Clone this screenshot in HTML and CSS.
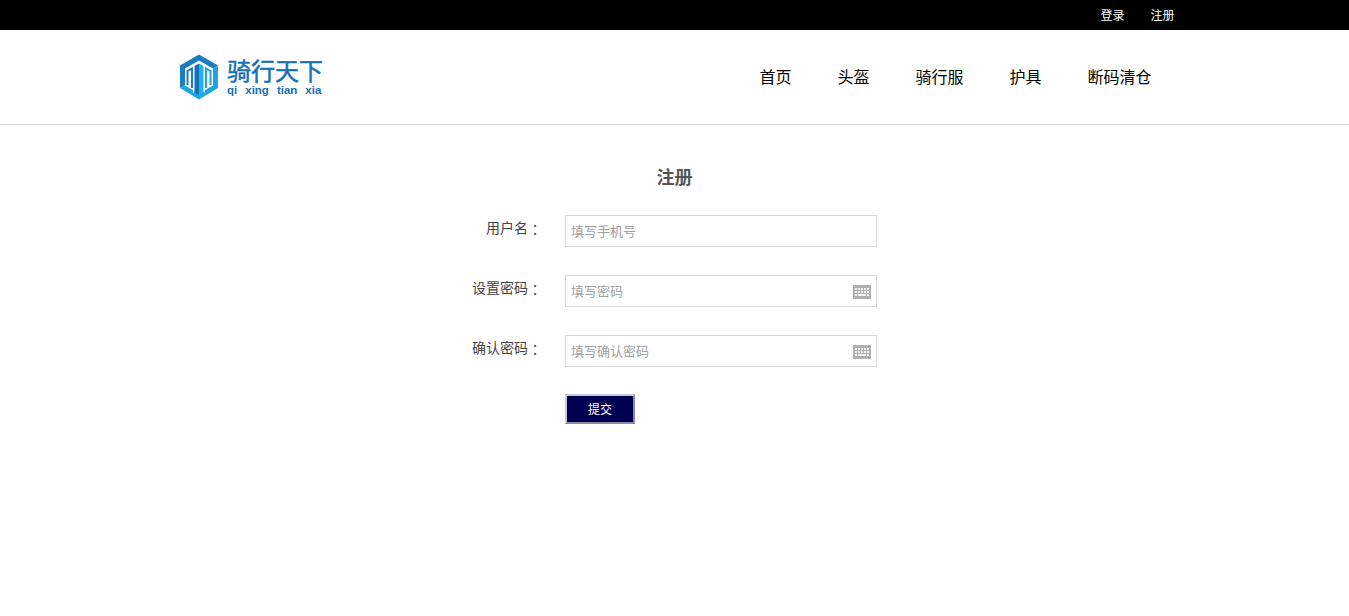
FILE: index.html
```html
<!DOCTYPE html>
<html lang="zh-CN">
<head>
<meta charset="utf-8">
<title>注册</title>
<link rel="stylesheet" href="styles.css">
</head>
<body>
<div class="topbar">
  <div class="container topbar-inner">
    <a class="top-link" href="#">登录</a>
    <a class="top-link" href="#">注册</a>
  </div>
</div>
<header class="header">
  <div class="container header-inner">
    <a class="logo" href="#">
      <svg class="logo-mark" width="40" height="46" viewBox="0 0 40 46">
        <path fill="#1a7cc4" d="M19 .5 38 11.500 33 14.500 19 6.500 5 14.500V31.500L0 34V11.500Z"/>
        <path fill="#1fa6e0" d="M38 11.500V34L19 45.500 0 34 5 31.500 19 39.500 33 31.500V14.500Z"/>
        <path fill="none" stroke="#1a7cc4" stroke-width="2" d="M7.500 31V17L12 14.500V34"/>
        <path fill="none" stroke="#1fa6e0" stroke-width="2" d="M30.500 31V17L26 14.500V34"/>
        <path fill="#fff" d="M13 13h1.500v25.500H13zM23.500 13H25v25.500h-1.500z"/>
        <path fill="#1670b8" d="M14.500 12 19 9.500V41L14.500 38.500Z"/>
        <path fill="#1cb4ea" d="M19 9.500 23.500 12V38.500L19 41Z"/>
      </svg>
      <span class="logo-text">
        <span class="logo-cn">骑行天下</span>
        <span class="logo-en"><span>qi</span><span>xing</span><span>tian</span><span>xia</span></span>
      </span>
    </a>
    <nav class="nav">
      <a href="#">首页</a>
      <a href="#">头盔</a>
      <a href="#">骑行服</a>
      <a href="#">护具</a>
      <a href="#">断码清仓</a>
    </nav>
  </div>
</header>
<main class="main">
  <h1 class="title">注册</h1>
  <form class="form">
    <div class="row">
      <label class="label">用户名<span class="colon" lang="zh-TW">：</span></label>
      <div class="field"><input class="input" type="text" placeholder="填写手机号"></div>
    </div>
    <div class="row">
      <label class="label">设置密码<span class="colon" lang="zh-TW">：</span></label>
      <div class="field">
        <input class="input" type="text" placeholder="填写密码">
        <svg class="kbd" width="18" height="14" viewBox="0 0 18 14">
          <rect width="18" height="14" fill="#b0b0b0"/>
          <path fill="#f2f2f2" d="M2 3h2v2H2zM5 3h2v2H5zM8 3h2v2H8zM11 3h2v2h-2zM14 3h2v2h-2zM2 6h2v2H2zM5 6h2v2H5zM8 6h2v2H8zM11 6h2v2h-2zM14 6h2v2h-2zM2 9h2v2H2zM5 9h8v2H5zM14 9h2v2h-2z"/>
        </svg>
      </div>
    </div>
    <div class="row">
      <label class="label">确认密码<span class="colon" lang="zh-TW">：</span></label>
      <div class="field">
        <input class="input" type="text" placeholder="填写确认密码">
        <svg class="kbd" width="18" height="14" viewBox="0 0 18 14">
          <rect width="18" height="14" fill="#b0b0b0"/>
          <path fill="#f2f2f2" d="M2 3h2v2H2zM5 3h2v2H5zM8 3h2v2H8zM11 3h2v2h-2zM14 3h2v2h-2zM2 6h2v2H2zM5 6h2v2H5zM8 6h2v2H8zM11 6h2v2h-2zM14 6h2v2h-2zM2 9h2v2H2zM5 9h8v2H5zM14 9h2v2h-2z"/>
        </svg>
      </div>
    </div>
    <div class="actions">
      <button class="submit" type="button">提交</button>
    </div>
  </form>
</main>
</body>
</html>
```
FILE: styles.css
```css
* { box-sizing: border-box; }
html, body { margin: 0; padding: 0; }
body {
  background: #fff;
  color: #333;
  font-family: "Liberation Sans", "Noto Sans CJK SC", sans-serif;
  font-size: 14px;
}
a { text-decoration: none; color: inherit; }
.container { width: 1000px; margin: 0 auto; }
.topbar { height: 30px; background: #000; }
.topbar-inner {
  display: flex;
  justify-content: flex-end;
  align-items: flex-start;
  gap: 26px;
  height: 30px;
}
.top-link { color: #fff; font-size: 12px; line-height: 32px; }
.header { height: 95px; border-bottom: 1px solid #dcdcdc; }
.header-inner {
  display: flex;
  justify-content: space-between;
  align-items: flex-start;
  height: 94px;
}
.logo { display: flex; margin: 24px 0 0 5.500px; gap: 7px; }
.logo-mark { display: block; }
.logo-text { display: flex; flex-direction: column; }
.logo-cn {
  color: #1570b5;
  font-size: 24px;
  line-height: 28px;
  padding-top: 4px;
  -webkit-text-stroke: 0.5px #1570b5;
  width: 96px;
}
.logo-en {
  display: flex;
  gap: 8px;
  margin-top: -3px;
  color: #1570b5;
  font-size: 11.500px;
  line-height: 14px;
  font-weight: 700;
}
.nav {
  display: flex;
  gap: 46px;
  margin: 37px 23px 0 0;
  color: #000;
  font-size: 16px;
  line-height: 22px;
}
.main { padding-top: 42px; }
.title {
  margin: 0;
  text-align: center;
  font-size: 18px;
  line-height: 22px;
  font-weight: 700;
  color: #555;
}
.form { width: 420px; margin: 26px 0 0 457px; }
.row { display: flex; height: 32px; margin-bottom: 28px; }
.label {
  width: 85px;
  text-align: right;
  font-size: 14px;
  line-height: 26px;
  color: #444;
}
.colon {
  font-family: "Noto Sans CJK TC", sans-serif;
  line-height: 1;
  vertical-align: -2px;
}
.field {
  position: relative;
  margin-left: 23px;
  width: 312px;
  height: 32px;
}
.input {
  display: block;
  width: 312px;
  height: 32px;
  border: 1px solid #d8d8d8;
  padding: 0 5px;
  font: 13px "Liberation Sans", "Noto Sans CJK SC", sans-serif;
  outline: none;
}
.input::placeholder { color: #a0a0a0; opacity: 1; }
.kbd { position: absolute; right: 6px; top: 10px; }
.actions { margin: -1px 0 0 108px; }
.submit {
  display: block;
  width: 70px;
  height: 30px;
  padding: 0 0 2px;
  background: #000050;
  border: 2px solid;
  border-color: #c8c8d8 #8a8a9a #8a8a9a #c8c8d8;
  color: #fff;
  font: 12px "Liberation Sans", "Noto Sans CJK SC", sans-serif;
}
```
